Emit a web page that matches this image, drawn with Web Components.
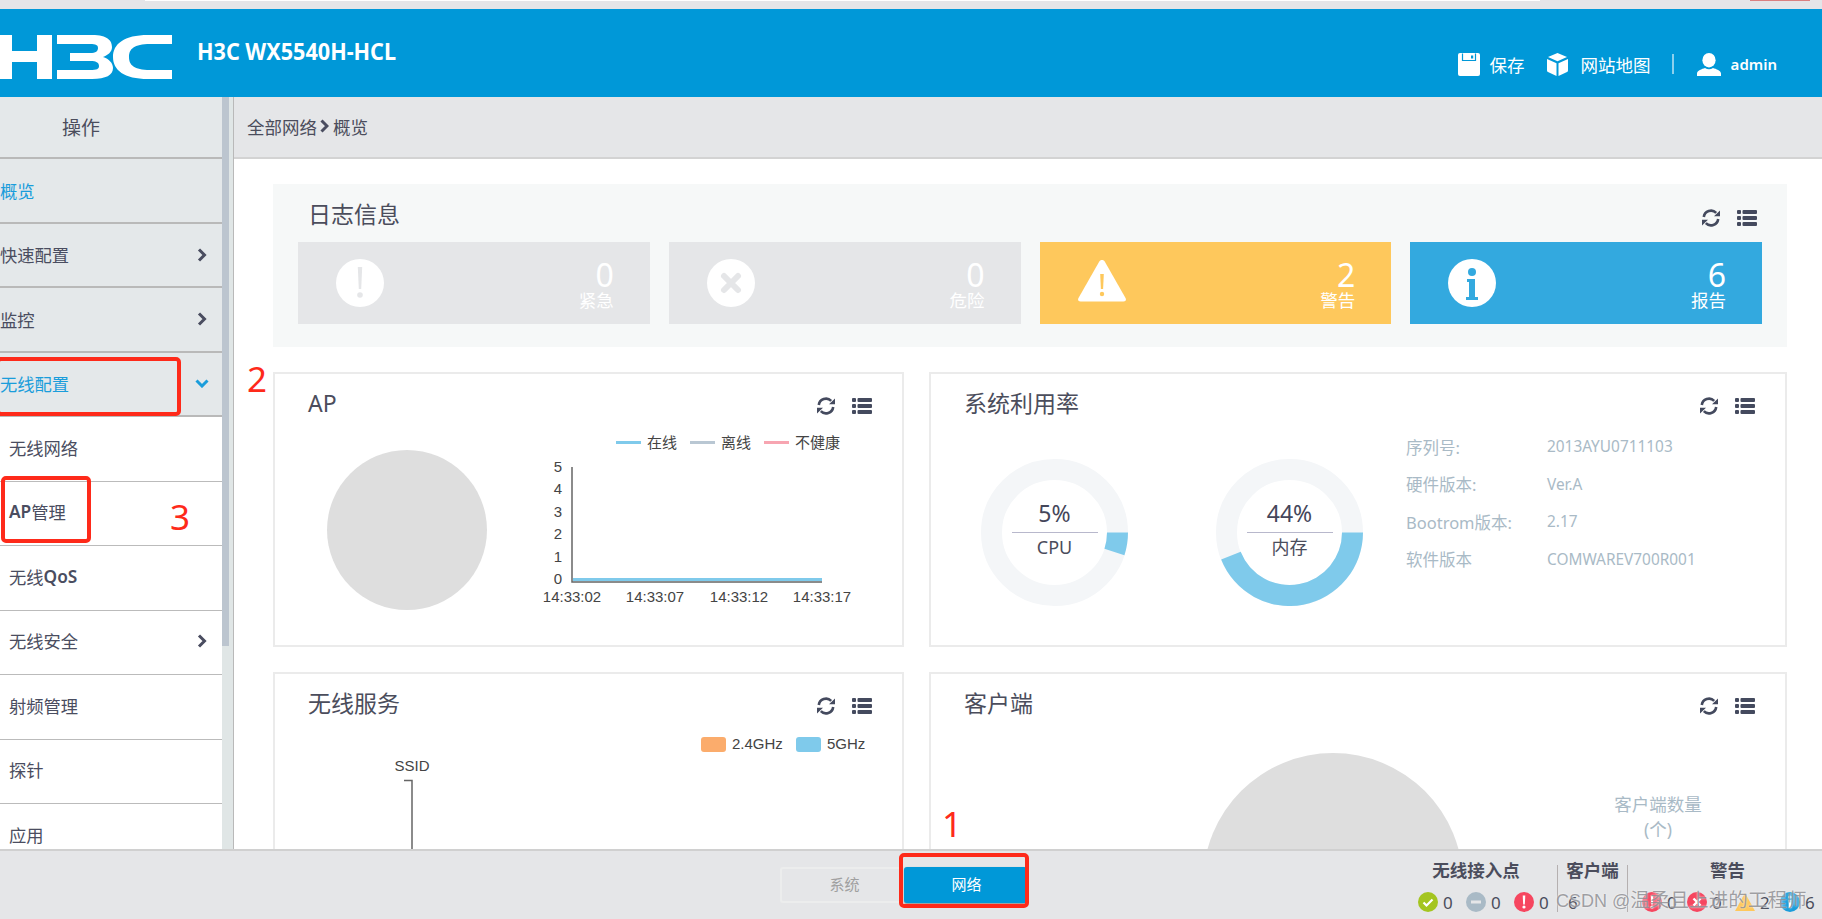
<!DOCTYPE html>
<html lang="zh">
<head>
<meta charset="utf-8">
<title>H3C WX5540H-HCL</title>
<style>
  html, body { margin: 0; height: 919px; overflow: hidden; background: #fff; }
  body {
    position: relative;
    display: flex;
    flex-direction: column;
    font-family: "Noto Sans", "Noto Sans CJK SC", sans-serif;
    color: #4b4d5c;
  }
  .main { flex: 1; display: flex; min-height: 0; }
  nav-item b { font-weight: 600; }
</style>
</head>
<body>
  <top-strip></top-strip>
  <app-header></app-header>
  <div class="main">
    <side-nav>
      <nav-item active>概览</nav-item>
      <nav-item chev="right">快速配置</nav-item>
      <nav-item chev="right">监控</nav-item>
      <nav-item active chev="down">无线配置</nav-item>
      <nav-item sub>无线网络</nav-item>
      <nav-item sub><b>AP</b>管理</nav-item>
      <nav-item sub>无线<b>QoS</b></nav-item>
      <nav-item sub chev="right">无线安全</nav-item>
      <nav-item sub>射频管理</nav-item>
      <nav-item sub>探针</nav-item>
      <nav-item sub>应用</nav-item>
    </side-nav>
    <dash-content>
      <dash-panel heading="日志信息" flat>
        <div style="display:grid;grid-template-columns:repeat(4,1fr);gap:19px">
          <log-tile kind="urgent" count="0">紧急</log-tile>
          <log-tile kind="danger" count="0">危险</log-tile>
          <log-tile kind="warn" count="2">警告</log-tile>
          <log-tile kind="info" count="6">报告</log-tile>
        </div>
      </dash-panel>
      <div style="display:grid;grid-template-columns:631px 858px;gap:25px">
        <dash-panel heading="AP" style="height:275px">
          <ap-chart></ap-chart>
        </dash-panel>
        <dash-panel heading="系统利用率" style="height:275px">
          <sys-usage></sys-usage>
        </dash-panel>
        <dash-panel heading="无线服务" style="height:300px">
          <ssid-chart></ssid-chart>
        </dash-panel>
        <dash-panel heading="客户端" style="height:300px">
          <client-pie></client-pie>
        </dash-panel>
      </div>
    </dash-content>
  </div>
  <app-footer>
    <stat-group slot="stats" heading="无线接入点" width="148" pad="8" shift="15" divider>
      <stat-item kind="ok" n="0"></stat-item>
      <stat-item kind="off" n="0"></stat-item>
      <stat-item kind="bad" n="0"></stat-item>
    </stat-group>
    <stat-group slot="stats" heading="客户端" width="70" pad="10" divider>
      <stat-item kind="none" n="6"></stat-item>
    </stat-group>
    <stat-group slot="stats" heading="警告" width="194" pad="14" lead="5">
      <stat-item kind="bad" n="0" pitch="45"></stat-item>
      <stat-item kind="cross" n="0" pitch="48"></stat-item>
      <stat-item kind="warn" n="2" pitch="45"></stat-item>
      <stat-item kind="info" n="6" pitch="40"></stat-item>
    </stat-group>
  </app-footer>

  <!-- red marks drawn over the shot -->
  <mark-box style="left:-4px;top:357px;width:185px;height:59px"></mark-box>
  <mark-box style="left:1px;top:476px;width:90px;height:67px"></mark-box>
  <mark-box style="left:899px;top:853px;width:130px;height:55px"></mark-box>
  <mark-num style="left:247px;top:355px">2</mark-num>
  <mark-num style="left:170px;top:493px">3</mark-num>
  <mark-num style="left:942px;top:800px">1</mark-num>
  <water-mark></water-mark>

<script>
const REFRESH = `<svg width="20" height="20" viewBox="0 0 20 20" fill="none">
  <path d="M2.800 9A7.300 7.300 0 0 1 15.200 4.800" stroke="#444a5e" stroke-width="2.600"/>
  <path d="M17.200 11A7.300 7.300 0 0 1 4.800 15.200" stroke="#444a5e" stroke-width="2.600"/>
  <path d="M13 8.200h6V2.600zM7 11.800H1v5.600z" fill="#444a5e"/></svg>`;
const LIST = `<svg width="20" height="18" viewBox="0 0 20 18" fill="#444a5e">
  <rect x="0" y="1" width="4" height="4" rx="1"/><rect x="5.500" y="1" width="14.500" height="4" rx="1"/>
  <rect x="0" y="7" width="4" height="4" rx="1"/><rect x="5.500" y="7" width="14.500" height="4" rx="1"/>
  <rect x="0" y="13" width="4" height="4" rx="1"/><rect x="5.500" y="13" width="14.500" height="4" rx="1"/></svg>`;

class TopStrip extends HTMLElement {
  constructor() {
    super();
    this.attachShadow({ mode: "open" });
  }
  connectedCallback() {
    this.shadowRoot.innerHTML = `
      <style>
        :host { display: flex; height: 9px; flex: none; background: #e4e5e8; padding-left: 145px; }
        .w { width: 1395px; height: 1px; background: #fff; }
        .r { width: 60px; height: 1px; margin-left: 210px; background: #d98080; }
      </style>
      <div class="w"></div><div class="r"></div>`;
  }
}

class AppHeader extends HTMLElement {
  constructor() {
    super();
    this.attachShadow({ mode: "open" });
  }
  connectedCallback() {
    this.shadowRoot.innerHTML = `
      <style>
        :host { display: flex; height: 88px; flex: none; background: #0098d8; color: #fff; }
        .logo { margin-top: 26px; width: 172px; height: 44px; flex: none; }
        .name {
          margin: 29px 0 0 25px; font-size: 24px; font-weight: 700; line-height: 26px;
          white-space: nowrap; transform: scaleX(.9); transform-origin: left top; width: 199px;
        }
        .tools { margin-left: auto; display: flex; align-items: center; height: 24px; margin-top: 43px; font-size: 17.500px; padding-right: 45px; }
        .tools svg { display: block; flex: none; }
        .t1 { margin-left: 10px; }
        .cube { margin-left: 22px; }
        .t2 { margin-left: 13px; }
        .sep { width: 2px; height: 20px; background: rgba(255,255,255,.55); margin: 0 23px 0 21px; }
        .admin { margin-left: 10px; font-size: 15px; font-weight: 600; }
      </style>
      <svg class="logo" viewBox="0 0 172 44" fill="#fff">
        <path d="M0 0h12v16h25V0h15v44H37V27H12v17H0z"/>
        <path d="M57 0H92C108 0 112 6 112 12C112 17 108 20 103 22C109 24 113 28 113 33C113 40 106 44 92 44H57V35H90C97 35 99 34 99 31C99 28 97 26 90 26H70V18H90C96 18 98 16 98 13C98 10 96 9 90 9H57Z"/>
        <path d="M172 0V9H150C134 9 129 14 129 22C129 30 134 35 150 35H172V44H148C124 44 113 35 113 22C113 9 124 0 148 0Z"/>
      </svg>
      <div class="name">H3C WX5540H-HCL</div>
      <div class="tools">
        <svg width="22" height="23" viewBox="0 0 22 23"><path fill="#fff" d="M2 0h18a2 2 0 0 1 2 2v19a2 2 0 0 1-2 2H2a2 2 0 0 1-2-2V2a2 2 0 0 1 2-2z"/><path fill="none" stroke="#0098d8" stroke-width="1.200" d="M4.500 .5v7h13v-7"/><rect x="13" y="2.500" width="2.200" height="3" fill="#0098d8"/></svg>
        <span class="t1">保存</span>
        <svg class="cube" width="21" height="23" viewBox="0 0 21 23"><path fill="#fff" d="M10.500 0l9.500 4-9.500 4.200L1 4zM0 6l9.500 4.200V23L1 19a1.600 1.600 0 0 1-1-1.500zM21 6l-9.500 4.200V23l8.500-4a1.600 1.600 0 0 0 1-1.500z"/></svg>
        <span class="t2">网站地图</span>
        <span class="sep"></span>
        <svg width="24" height="23" viewBox="0 0 24 23"><ellipse cx="12" cy="7.200" rx="6.600" ry="7.200" fill="#fff"/><path fill="#fff" d="M0 23v-2.500c0-3 5-4.500 8-5.500 2.500 1.600 5.500 1.600 8 0 3 1 8 2.500 8 5.500V23z"/></svg>
        <span class="admin">admin</span>
      </div>`;
  }
}

class SideNav extends HTMLElement {
  constructor() {
    super();
    this.attachShadow({ mode: "open" });
  }
  connectedCallback() {
    this.shadowRoot.innerHTML = `
      <style>
        :host { display: flex; width: 234px; flex: none; box-sizing: border-box; border-right: 1px solid #b9b9b9; overflow: hidden; }
        .list { width: 222px; flex: none; overflow: hidden; background: #e4e8ea; }
        .head {
          height: 62px; box-sizing: border-box; border-bottom: 2px solid #b9b9b9;
          display: flex; align-items: center; justify-content: center; padding-right: 60px;
          font-size: 19px; color: #4b4d5c;
        }
        .track { flex: 1; background: #e0e6e6; }
        .thumb { width: 7px; height: 549px; background: #bcc5cf; }
      </style>
      <div class="list">
        <div class="head">操作</div>
        <slot></slot>
      </div>
      <div class="track"><div class="thumb"></div></div>`;
  }
}

class NavItem extends HTMLElement {
  constructor() {
    super();
    this.attachShadow({ mode: "open" });
  }
  connectedCallback() {
    const chev = this.getAttribute("chev");
    const color = this.hasAttribute("active") ? "#1a9ddb" : "#4a4d60";
    let icon = "";
    if (chev === "right") {
      icon = `<svg width="10" height="14" viewBox="0 0 10 14"><path d="M2 1.500 7.500 7 2 12.500" fill="none" stroke="${color}" stroke-width="3"/></svg>`;
    } else if (chev === "down") {
      icon = `<svg width="14" height="9" viewBox="0 0 14 9"><path d="M1.500 1.500 7 7l5.500-5.500" fill="none" stroke="${color}" stroke-width="3"/></svg>`;
    }
    this.shadowRoot.innerHTML = `
      <style>
        :host {
          display: flex; align-items: center; box-sizing: border-box; height: 64.500px;
          background: #e4e8ea; border-bottom: 2px solid #b9b9b9; font-size: 17.300px;
          color: ${color}; padding-bottom: 0; white-space: nowrap;
        }
        :host([sub]) { background: #fff; padding: 0 0 3px 9px; border-bottom: 1px solid #bbb; }
        .icon { margin-left: auto; width: 18px; margin-right: 11px; display: flex; justify-content: center; }
      </style>
      <slot></slot>
      <span class="icon">${icon}</span>`;
  }
}

class DashContent extends HTMLElement {
  constructor() {
    super();
    this.attachShadow({ mode: "open" });
  }
  connectedCallback() {
    this.shadowRoot.innerHTML = `
      <style>
        :host { display: flex; flex-direction: column; flex: 1; min-width: 0; overflow: hidden; }
        .crumb {
          height: 62px; flex: none; box-sizing: border-box; background: #e5e6e8; border-bottom: 2px solid #d3d3d3;
          display: flex; align-items: center; padding: 0 0 2px 13px; font-size: 17.500px; color: #4b4d5c;
        }
        .crumb svg { margin: 0 4px 0 3px; }
        .body { display: flex; flex-direction: column; gap: 25px; padding: 25px 35px 0 39px; }
      </style>
      <div class="crumb">全部网络<svg width="9" height="14" viewBox="0 0 9 14"><path d="M1.500 1.500 7 7l-5.500 5.500" fill="none" stroke="#4a4d60" stroke-width="3"/></svg>概览</div>
      <div class="body"><slot></slot></div>`;
  }
}

class DashPanel extends HTMLElement {
  constructor() {
    super();
    this.attachShadow({ mode: "open" });
  }
  connectedCallback() {
    this.shadowRoot.innerHTML = `
      <style>
        :host { display: block; box-sizing: border-box; border: 2px solid #ebebeb; overflow: hidden; background: #fff; }
        :host([flat]) { border: 0; background: #f6f8f8; height: 163px; padding-bottom: 23px; }
        .top {
          display: flex; height: 58px; box-sizing: border-box; padding: 15px 30px 0 33px;
          font-size: 23px; line-height: 28px; color: #4b4d5c;
        }
        :host([flat]) .top { padding: 16px 30px 0 35px; }
        .tools { margin-left: auto; display: flex; gap: 16px; align-items: center; height: 20px; margin-top: 7px; }
        :host([flat]) .tools { margin-top: 8px; }
        .tools svg { display: block; }
        :host([flat]) .slot { padding: 0 25px; }
      </style>
      <div class="top">
        <span>${this.getAttribute("heading")}</span>
        <span class="tools">${REFRESH}${LIST}</span>
      </div>
      <div class="slot"><slot></slot></div>`;
  }
}

class LogTile extends HTMLElement {
  constructor() {
    super();
    this.attachShadow({ mode: "open" });
  }
  connectedCallback() {
    const colors = { urgent: "#e5e6e8", danger: "#e5e6e8", warn: "#fec85c", info: "#33a9df" };
    const c = colors[this.getAttribute("kind")];
    const icons = {
      urgent: `<circle cx="24" cy="24" r="24" fill="#fff"/><path d="M21.800 8h4.400l-1 22h-2.400z" fill="${c}"/><circle cx="24" cy="36" r="2.800" fill="${c}"/>`,
      danger: `<circle cx="24" cy="24" r="24" fill="#fff"/><path d="M17 17l14 14M31 17 17 31" stroke="${c}" stroke-width="6" stroke-linecap="round"/>`,
      warn: `<path d="M24 1c1.300 0 2.200.6 3 2l20.500 36c1 1.800.2 3.500-2 3.500h-43c-2.200 0-3-1.700-2-3.500L21 3c.8-1.400 1.700-2 3-2z" fill="#fff"/><path d="M22.200 15h3.600l-.7 15h-2.200z" fill="${c}"/><circle cx="24" cy="35" r="2.200" fill="${c}"/>`,
      info: `<circle cx="24" cy="24" r="24" fill="#fff"/><circle cx="24" cy="13" r="4" fill="${c}"/><path d="M19 20h8v18h3v3H18v-3h3V23h-2z" fill="${c}"/>`
    };
    this.shadowRoot.innerHTML = `
      <style>
        :host {
          display: flex; align-items: center; height: 82px; box-sizing: border-box; padding: 0 36px 0 38px;
          background: ${c}; color: #fff;
        }
        svg { display: block; flex: none; }
        .num { margin-left: auto; text-align: right; padding-top: 2px; }
        .n { font-size: 32px; line-height: 33px; }
        .l { font-size: 17.500px; line-height: 19px; }
      </style>
      <svg width="48" height="48" viewBox="0 0 48 48">${icons[this.getAttribute("kind")]}</svg>
      <div class="num">
        <div class="n">${this.getAttribute("count")}</div>
        <div class="l"><slot></slot></div>
      </div>`;
  }
}

class ApChart extends HTMLElement {
  constructor() {
    super();
    this.attachShadow({ mode: "open" });
  }
  connectedCallback() {
    const ox = 535, oy = 432;
    const ticks = [[5, 467], [4, 489.5], [3, 512], [2, 534.5], [1, 557], [0, 579]]
      .map(([v, y]) => `<text x="${562 - ox}" y="${y - oy + 4.5}" text-anchor="end">${v}</text>`).join("");
    const times = [["14:33:02", 572], ["14:33:07", 655], ["14:33:12", 739], ["14:33:17", 822]]
      .map(([t, x]) => `<text x="${x - ox}" y="${602 - oy}" text-anchor="middle">${t}</text>`).join("");
    const legend = [["在线", 616, "#7fcaeb"], ["离线", 690, "#b9c7d3"], ["不健康", 764, "#f7a5b1"]]
      .map(([t, x, c]) => `<rect x="${x - ox}" y="9" width="25" height="3" fill="${c}"/><text class="cjk" x="${x + 31 - ox}" y="16">${t}</text>`).join("");
    this.shadowRoot.innerHTML = `
      <style>
        :host { display: flex; align-items: flex-start; }
        .pie { width: 160px; height: 160px; border-radius: 50%; background: #dedede; margin: 18px 0 0 52px; flex: none; }
        svg { margin-left: 48px; flex: none; display: block; }
        text { font: 15px "Liberation Sans", sans-serif; fill: #444; }
        .cjk { font: 15px "Noto Sans", "Noto Sans CJK SC", sans-serif; }
      </style>
      <div class="pie"></div>
      <svg width="340" height="190" viewBox="0 0 340 190">
        ${legend}${ticks}${times}
        <path d="M${572 - ox} ${467 - oy}V${582 - oy}H${822 - ox}" fill="none" stroke="#666" stroke-width="1.500"/>
        <rect x="${573 - ox}" y="${578 - oy}" width="249" height="3" fill="#7fcaeb"/>
      </svg>`;
  }
}

class UsageDonut extends HTMLElement {
  constructor() {
    super();
    this.attachShadow({ mode: "open" });
  }
  connectedCallback() {
    const v = Number(this.getAttribute("value"));
    const a = v / 100 * 2 * Math.PI;
    const R = 73.5, r = 52.5, c = 73.5;
    const large = v > 50 ? 1 : 0;
    const pt = (rad, ang) => `${(c + rad * Math.cos(ang)).toFixed(2)} ${(c + rad * Math.sin(ang)).toFixed(2)}`;
    const arc = `M${pt(R, 0)}A${R} ${R} 0 ${large} 1 ${pt(R, a)}L${pt(r, a)}A${r} ${r} 0 ${large} 0 ${pt(r, 0)}Z`;
    this.shadowRoot.innerHTML = `
      <style>
        :host { display: grid; width: 147px; height: 147px; flex: none; }
        svg, .mid { grid-area: 1 / 1; }
        .mid { justify-self: center; width: 86px; text-align: center; padding-top: 39px; color: #4b4d5c; }
        .v { height: 34px; line-height: 30px; font-size: 23px; border-bottom: 1px solid #b8b8cc; color: #44465a; }
        .l { font-size: 18px; line-height: 28px; }
      </style>
      <svg width="147" height="147" viewBox="0 0 147 147">
        <circle cx="73.5" cy="73.5" r="63" fill="none" stroke="#f4f6f8" stroke-width="21"/>
        <path d="${arc}" fill="#7fcaeb"/>
      </svg>
      <div class="mid">
        <div class="v">${v}%</div>
        <div class="l">${this.getAttribute("label")}</div>
      </div>`;
  }
}

class SysUsage extends HTMLElement {
  constructor() {
    super();
    this.attachShadow({ mode: "open" });
  }
  connectedCallback() {
    this.shadowRoot.innerHTML = `
      <style>
        :host { display: flex; align-items: flex-start; padding-left: 50px; }
        .d1 { margin-top: 27px; }
        .d2 { margin: 27px 0 0 88px; }
        .info {
          margin: -4px 0 0 43px; display: grid; grid-template-columns: 141px auto;
          grid-auto-rows: 37.5px; align-items: center; font-size: 16.5px; color: #a9bac6; white-space: nowrap;
        }
        .info span:nth-child(even) { font-size: 15.4px; }
      </style>
      <usage-donut class="d1" value="5" label="CPU"></usage-donut>
      <usage-donut class="d2" value="44" label="内存"></usage-donut>
      <div class="info">
        <span>序列号:</span><span>2013AYU0711103</span>
        <span>硬件版本:</span><span>Ver.A</span>
        <span>Bootrom版本:</span><span>2.17</span>
        <span>软件版本</span><span>COMWAREV700R001</span>
      </div>`;
  }
}

class SsidChart extends HTMLElement {
  constructor() {
    super();
    this.attachShadow({ mode: "open" });
  }
  connectedCallback() {
    this.shadowRoot.innerHTML = `
      <style>
        :host { display: block; }
        svg { display: block; }
        text { font: 15px "Liberation Sans", sans-serif; fill: #444; }
      </style>
      <svg width="627" height="240" viewBox="0 0 627 240">
        <rect x="426" y="5" width="25" height="15" rx="3" fill="#fbac6c"/>
        <text x="457" y="17">2.4GHz</text>
        <rect x="521" y="5" width="25" height="15" rx="3" fill="#7fcaeb"/>
        <text x="552" y="17">5GHz</text>
        <text x="137" y="39" text-anchor="middle">SSID</text>
        <path d="M129 48.5h8V240" fill="none" stroke="#666" stroke-width="1.5"/>
      </svg>`;
  }
}

class ClientPie extends HTMLElement {
  constructor() {
    super();
    this.attachShadow({ mode: "open" });
  }
  connectedCallback() {
    this.shadowRoot.innerHTML = `
      <style>
        :host { display: flex; align-items: flex-start; padding-left: 272px; }
        .pie { width: 260px; height: 260px; border-radius: 50%; background: #dedede; margin-top: 21px; flex: none; }
        .txt { margin: 60px 0 0 150px; width: 90px; text-align: center; font-size: 17.5px; line-height: 25px; color: #a9bac6; white-space: nowrap; }
      </style>
      <div class="pie"></div>
      <div class="txt">客户端数量<br>(个)</div>`;
  }
}

class AppFooter extends HTMLElement {
  constructor() {
    super();
    this.attachShadow({ mode: "open" });
  }
  connectedCallback() {
    this.shadowRoot.innerHTML = `
      <style>
        :host {
          display: flex; height: 70px; flex: none; box-sizing: border-box; background: #e5e6e8;
          border-top: 2px solid #d0d0d0; position: relative;
        }
        .tabs { display: flex; margin: 16px 0 0 780px; height: 36px; font-size: 15px; }
        .tab { width: 124px; box-sizing: border-box; display: flex; align-items: center; justify-content: center; border-radius: 3px; padding-bottom: 3px; }
        .sys { border: 2px solid #eceded; color: #a0a0a0; padding-left: 5px; }
        .net { width: 123px; background: #0098d8; color: #fff; box-shadow: 0 1px 2px #888; padding-left: 2px; }
        .stats { margin-left: auto; display: flex; }
      </style>
      <div class="tabs"><div class="tab sys">系统</div><div class="tab net">网络</div></div>
      <div class="stats"><slot name="stats"></slot></div>`;
  }
}

class StatGroup extends HTMLElement {
  constructor() {
    super();
    this.attachShadow({ mode: "open" });
  }
  connectedCallback() {
    const w = this.getAttribute("width");
    const pad = this.getAttribute("pad") || 0;
    const shift = this.getAttribute("shift") || 0;
    const lead = this.getAttribute("lead") || 0;
    this.shadowRoot.innerHTML = `
      <style>
        :host { display: block; width: ${w}px; height: 47px; margin-top: 14px; box-sizing: border-box; }
        :host([divider]) { border-right: 1px solid #b5b0b0; }
        .t {
          margin-top: -6px; height: 22px; line-height: 22px; font-size: 17.5px; font-weight: 700; text-align: center;
          color: #4b4d5c; padding: 0 ${shift}px 0 ${lead}px; white-space: nowrap;
        }
        .r { display: flex; margin-top: 10px; padding-left: ${pad}px; height: 22px; }
      </style>
      <div class="t">${this.getAttribute("heading")}</div>
      <div class="r"><slot></slot></div>`;
  }
}

class StatItem extends HTMLElement {
  constructor() {
    super();
    this.attachShadow({ mode: "open" });
  }
  connectedCallback() {
    const icons = {
      ok: `<circle cx="10" cy="10" r="10" fill="#a4c520"/><path d="M5.500 10.500l3 3 6-6" fill="none" stroke="#fff" stroke-width="2.200"/>`,
      off: `<circle cx="10" cy="10" r="10" fill="#a9bac6"/><rect x="5" y="8.500" width="10" height="3" fill="#e5e6e8"/>`,
      bad: `<circle cx="10" cy="10" r="10" fill="#f6465f"/><path d="M8.700 3.500h2.600l-.5 9h-1.600z" fill="#fff"/><circle cx="10" cy="15" r="1.600" fill="#fff"/>`,
      cross: `<circle cx="10" cy="10" r="10" fill="#f6465f"/><path d="M6.500 6.500l7 7m0-7l-7 7" stroke="#fff" stroke-width="2.400"/>`,
      warn: `<path d="M10 1 20 19H0z" fill="#fec85c"/>`,
      info: `<circle cx="10" cy="10" r="10" fill="#1a9ddb"/><rect x="8.700" y="8" width="2.600" height="8" fill="#fff"/><circle cx="10" cy="5" r="1.600" fill="#fff"/>`
    };
    const kind = this.getAttribute("kind");
    const pitch = this.getAttribute("pitch") || 48;
    const icon = kind === "none" ? "" : `<svg width="20" height="20" viewBox="0 0 20 20">${icons[kind]}</svg>`;
    this.shadowRoot.innerHTML = `
      <style>
        :host { display: flex; align-items: center; gap: 5px; width: ${pitch}px; flex: none; font-size: 17px; color: #4b4d5c; }
        svg { display: block; flex: none; }
      </style>
      ${icon}<span>${this.getAttribute("n")}</span>`;
  }
}

class MarkBox extends HTMLElement {
  constructor() {
    super();
    this.attachShadow({ mode: "open" });
  }
  connectedCallback() {
    this.shadowRoot.innerHTML = `
      <style>
        :host { position: absolute; display: block; box-sizing: border-box; border: 4px solid #fe2a1a; border-radius: 5px; }
      </style>`;
  }
}

class MarkNum extends HTMLElement {
  constructor() {
    super();
    this.attachShadow({ mode: "open" });
  }
  connectedCallback() {
    this.shadowRoot.innerHTML = `
      <style>
        :host { position: absolute; display: block; font: 35px/48px "Noto Sans", sans-serif; color: #fe2a1a; }
      </style>
      <slot></slot>`;
  }
}

class WaterMark extends HTMLElement {
  constructor() {
    super();
    this.attachShadow({ mode: "open" });
  }
  connectedCallback() {
    this.shadowRoot.innerHTML = `
      <style>
        :host {
          position: absolute; left: 1556px; top: 885px; display: block; white-space: nowrap;
          font: 19.6px/30px "Noto Sans", "Noto Sans CJK SC", sans-serif; color: rgba(130,130,135,.75);
          text-shadow: 0 0 2px rgba(255,255,255,.9);
        }
        .en { font: 18px/30px "Liberation Sans", sans-serif; }
      </style>
      <span class="en">CSDN @</span>温柔且上进的工程师`;
  }
}

customElements.define("top-strip", TopStrip);
customElements.define("app-header", AppHeader);
customElements.define("side-nav", SideNav);
customElements.define("nav-item", NavItem);
customElements.define("dash-content", DashContent);
customElements.define("dash-panel", DashPanel);
customElements.define("log-tile", LogTile);
customElements.define("ap-chart", ApChart);
customElements.define("usage-donut", UsageDonut);
customElements.define("sys-usage", SysUsage);
customElements.define("ssid-chart", SsidChart);
customElements.define("client-pie", ClientPie);
customElements.define("app-footer", AppFooter);
customElements.define("stat-group", StatGroup);
customElements.define("stat-item", StatItem);
customElements.define("mark-box", MarkBox);
customElements.define("mark-num", MarkNum);
customElements.define("water-mark", WaterMark);
</script>
</body>
</html>
